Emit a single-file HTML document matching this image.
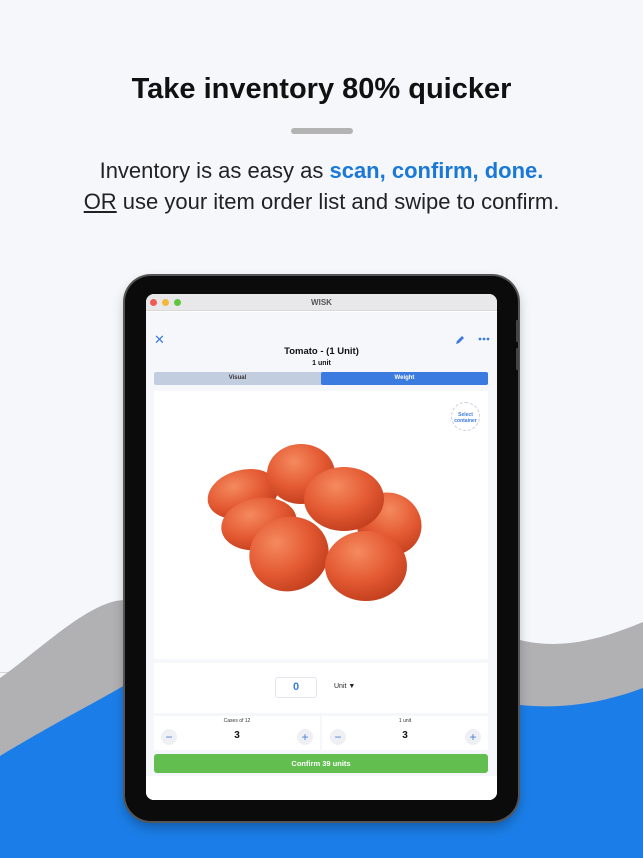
<!DOCTYPE html>
<html><head><meta charset="utf-8"><style>
*{margin:0;padding:0;box-sizing:border-box}
body{width:643px;height:858px;overflow:hidden;background:#f5f7fb;font-family:"Liberation Sans",sans-serif;position:relative}
.abs{position:absolute}
h1{position:absolute;top:73px;left:0;width:643px;text-align:center;font-size:29px;font-weight:bold;color:#111}
.bar{left:291px;top:128px;width:62px;height:6px;border-radius:3px;background:#b3b3b3}
.sub{left:0;width:643px;text-align:center;font-size:22px;color:#222}
.blue{color:#1a78d8;font-weight:bold}
.dev{left:125px;top:276px;width:393px;height:545px;border-radius:26px;background:#0b0b0b;box-shadow:0 0 0 2px #555,0 6px 12px rgba(0,0,0,.3)}
.scr{left:146px;top:294px;width:351px;height:506px;border-radius:8px;background:#fff;overflow:hidden}
.tb{height:17px;background:#e8e8ea;border-bottom:1px solid #d8d8d8;font-size:8px;font-weight:bold;color:#555;text-align:center;line-height:17px;position:relative}
.dot{position:absolute;top:5px;width:7px;height:7px;border-radius:50%}
.card{position:absolute;background:#fff}
.c{text-align:center;position:absolute}
.pm{position:absolute;width:16px;height:16px;border-radius:50%;background:#eef0f4;color:#4a7fd6;font-size:12px;line-height:16px;text-align:center}
</style></head><body>
<svg class="abs" style="left:0;top:560px" width="643" height="298" viewBox="0 0 643 298">
<rect x="0" y="112" width="22" height="1" fill="#d5d5d5"/>
<path d="M0 118 C40 90 90 40 125 40 L520 80 C560 90 600 80 643 62 L643 298 L0 298Z" fill="#b1b0b2"/>
<path d="M0 196 C60 160 100 140 125 125 L520 145 C570 150 610 140 643 128 L643 298 L0 298Z" fill="#1b7ee8"/>
</svg>
<h1>Take inventory 80% quicker</h1>
<div class="abs bar"></div>
<div class="abs sub" style="top:158px">Inventory is as easy as <span class="blue">scan, confirm, done.</span></div>
<div class="abs sub" style="top:189px"><u>OR</u> use your item order list and swipe to confirm.</div>
<div class="abs dev"></div>
<div class="abs" style="left:516px;top:320px;width:3px;height:22px;background:#444;border-radius:1px"></div>
<div class="abs" style="left:516px;top:348px;width:3px;height:22px;background:#444;border-radius:1px"></div>
<div class="abs scr">
 <div class="tb">WISK<span class="dot" style="left:4px;background:#ed5b53"></span><span class="dot" style="left:16px;background:#f4b73b"></span><span class="dot" style="left:28px;background:#5ec640"></span></div>
 <div style="position:absolute;top:18px;left:0;right:0;bottom:0;background:#f5f7fb"></div>
 <div class="c" style="left:8px;top:38px;color:#3b7be0;font-size:13px">✕</div>
 <svg class="abs" style="left:308px;top:40px" width="12" height="12" viewBox="0 0 12 12"><path d="M2 10 L3 7 L8 2 L10 4 L5 9Z" fill="#3b7be0"/></svg>
 <svg class="abs" style="left:332px;top:43px" width="12" height="4" viewBox="0 0 12 4"><circle cx="2" cy="2" r="1.4" fill="#3b7be0"/><circle cx="6" cy="2" r="1.4" fill="#3b7be0"/><circle cx="10" cy="2" r="1.4" fill="#3b7be0"/></svg>
 <div class="c" style="left:0;width:351px;top:52px;font-size:9.5px;font-weight:bold;color:#111">Tomato - (1 Unit)</div>
 <div class="c" style="left:0;width:351px;top:66px;font-size:7px;font-weight:bold;color:#111">1 unit</div>
 <div class="abs" style="left:8px;top:78px;width:334px;height:13px;border-radius:2px;background:#c3cde0"></div>
 <div class="abs" style="left:175px;top:78px;width:167px;height:13px;border-radius:2px;background:#3b7be0"></div>
 <div class="c" style="left:8px;width:167px;top:81px;font-size:6px;font-weight:bold;color:#333">Visual</div>
 <div class="c" style="left:175px;width:167px;top:81px;font-size:6px;font-weight:bold;color:#fff">Weight</div>
 <div class="card" style="left:8px;top:97px;width:334px;height:268px"></div>
 <div class="abs" style="left:305px;top:108px;width:29px;height:29px;border-radius:50%;border:1px dashed #ccd;background:#fff;font-size:5px;color:#3b7be0;text-align:center;padding-top:9px;font-weight:bold">Select<br>container</div>
 <svg class="abs" style="left:55px;top:150px" width="230" height="170" viewBox="0 0 230 170">
 <defs><radialGradient id="t" cx=".4" cy=".3" r=".75"><stop offset="0" stop-color="#f58a5e"/><stop offset=".55" stop-color="#e45a33"/><stop offset="1" stop-color="#c03d1c"/></radialGradient></defs>
 <ellipse cx="42" cy="50" rx="36" ry="24" fill="url(#t)" transform="rotate(-15 42 50)"/>
 <ellipse cx="188" cy="80" rx="33" ry="31" fill="url(#t)" transform="rotate(30 188 80)"/>
 <ellipse cx="100" cy="30" rx="34" ry="30" fill="url(#t)"/>
 <ellipse cx="58" cy="80" rx="38" ry="26" fill="url(#t)" transform="rotate(-10 58 80)"/>
 <ellipse cx="143" cy="55" rx="40" ry="32" fill="url(#t)"/>
 <ellipse cx="88" cy="110" rx="40" ry="37" fill="url(#t)" transform="rotate(-20 88 110)"/>
 <ellipse cx="165" cy="122" rx="41" ry="35" fill="url(#t)"/>
 </svg>
 <div class="card" style="left:8px;top:369px;width:334px;height:50px"></div>
 <div class="abs" style="left:129px;top:383px;width:42px;height:21px;border:1px solid #e3e6ec;border-radius:3px;text-align:center;font-size:11px;font-weight:bold;color:#3b7be0;line-height:19px">0</div>
 <div class="abs" style="left:188px;top:389px;font-size:7px;color:#222">Unit <span style="font-size:7px">▼</span></div>
 <div class="card" style="left:8px;top:422px;width:166px;height:34px"></div>
 <div class="card" style="left:176px;top:422px;width:166px;height:34px"></div>
 <div class="c" style="left:8px;width:166px;top:424px;font-size:5px;color:#333">Cases of 12</div>
 <div class="c" style="left:176px;width:166px;top:424px;font-size:5px;color:#333">1 unit</div>
 <div class="c" style="left:8px;width:166px;top:436px;font-size:10px;font-weight:bold;color:#111">3</div>
 <div class="c" style="left:176px;width:166px;top:436px;font-size:10px;font-weight:bold;color:#111">3</div>
 <div class="pm" style="left:15px;top:435px">−</div><div class="pm" style="left:151px;top:435px">+</div>
 <div class="pm" style="left:184px;top:435px">−</div><div class="pm" style="left:319px;top:435px">+</div>
 <div class="abs" style="left:8px;top:460px;width:334px;height:19px;border-radius:3px;background:#62bf4f;color:#fff;font-size:7.5px;font-weight:bold;text-align:center;line-height:19px">Confirm 39 units</div>
 <div class="card" style="left:0;top:482px;width:351px;height:24px"></div>
</div>
</body></html>
